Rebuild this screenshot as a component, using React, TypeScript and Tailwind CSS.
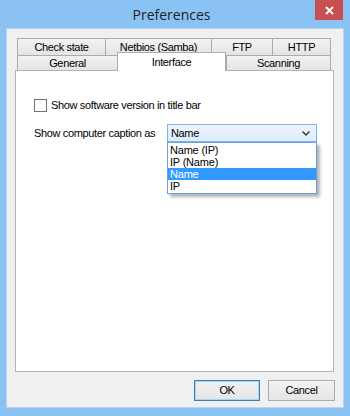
import { useState } from "react";

const rowOne = [
  { label: "Check state", w: "w-[88px]" },
  { label: "Netbios (Samba)", w: "w-[106px]" },
  { label: "FTP", w: "w-[61px]" },
  { label: "HTTP", w: "w-[59px]" },
];

const rowTwo = [
  { label: "General", w: "w-[100px]" },
  { label: "Interface", w: "w-[109px]" },
  { label: "Scanning", w: "w-[105px]" },
];

const options = ["Name (IP)", "IP (Name)", "Name", "IP"];

const Preferences = () => {
  const [showVersion, setShowVersion] = useState(false);
  const [caption, setCaption] = useState("Name");
  const active = "Interface";

  return (
    <div className="w-[350px] h-[416px] bg-[#8ac2f4] flex flex-col font-['Liberation_Sans',Arial,sans-serif] text-[11px] tracking-[-0.35px] text-black overflow-hidden">
      {/* title bar */}
      <div className="h-[28px] flex items-start shrink-0">
        <div className="w-[28px]" />
        <div className="flex-1 text-center pt-[4px] font-['Open_Sans',sans-serif] text-[14px] tracking-normal text-[#222]">
          Preferences
        </div>
        <button className="w-[28px] h-[20px] mr-[7px] bg-[#c75050] flex items-center justify-center">
          <svg width="9" height="9" viewBox="0 0 9 9">
            <path d="M1 1 L8 8 M8 1 L1 8" stroke="white" strokeWidth="1.8" />
          </svg>
        </button>
      </div>

      {/* client */}
      <div className="flex-1 mx-[6px] mb-[8px] border border-[#b6d5f4] bg-[#f0f0f0] flex flex-col pt-[9px] pb-[6px]">
        <div className="pl-[10px] flex">
          {rowOne.map((t, i) => (
            <div
              key={t.label}
              className={`${t.w} h-[17px] border-t border-l border-[#acacac] bg-gradient-to-b from-[#f2f2f2] to-[#e4e4e4] flex items-center justify-center ${
                i === rowOne.length - 1 ? "border-r" : ""
              }`}
            >
              {t.label}
            </div>
          ))}
        </div>
        <div className="pl-[10px] flex items-end h-[15px]">
          {rowTwo.map((t, i) =>
            t.label === active ? (
              <div
                key={t.label}
                className={`${t.w} h-[19px] -mb-px relative z-10 bg-white border-t border-l border-r border-[#acacac] flex items-start justify-center pt-[1px]`}
              >
                {t.label}
              </div>
            ) : (
              <div
                key={t.label}
                className={`${t.w} h-[15px] border-t border-l border-[#acacac] bg-gradient-to-b from-[#f2f2f2] to-[#e4e4e4] flex items-center justify-center ${
                  i === rowTwo.length - 1 ? "border-r" : ""
                }`}
              >
                {t.label}
              </div>
            )
          )}
        </div>

        {/* panel */}
        <div className="ml-[8px] mr-[9px] flex-1 bg-white border border-[#b4b4b4] pt-[28px] pl-[18px]">
          <label className="flex items-center gap-[4px] h-[13px]">
            <span
              onClick={() => setShowVersion(!showVersion)}
              className="w-[13px] h-[13px] border border-[#707070] bg-white flex items-center justify-center"
            >
              {showVersion && <span className="text-[10px]">✓</span>}
            </span>
            <span>Show software version in title bar</span>
          </label>

          <div className="flex items-center mt-[12px]">
            <span className="w-[133px]">Show computer caption as</span>
            <div className="relative">
              <div className="w-[150px] h-[18px] border border-[#7eb4ea] bg-gradient-to-b from-[#edf5fc] to-[#dcecfc] flex items-center justify-between pl-[3px] pr-[6px]">
                <span>{caption}</span>
                <svg width="8" height="5" viewBox="0 0 8 5">
                  <path d="M0.5 0.5 L4 4 L7.5 0.5" stroke="#333" strokeWidth="1.4" fill="none" />
                </svg>
              </div>
              <div className="absolute left-0 top-full w-[150px] bg-white border border-[#6d9fd6] shadow-[3px_3px_3px_rgba(0,0,0,0.3)] py-[1px]">
                {options.map((o) => (
                  <div
                    key={o}
                    onClick={() => setCaption(o)}
                    className={`h-[12px] leading-[12px] pl-[2px] text-[11px] tracking-[-0.2px] overflow-hidden ${
                      o === caption ? "bg-[#3399ff] text-white" : ""
                    }`}
                  >
                    {o}
                  </div>
                ))}
              </div>
            </div>
          </div>
        </div>

        {/* buttons */}
        <div className="flex justify-end gap-[8px] mt-[8px] mr-[8px]">
          <button className="w-[66px] h-[21px] border border-[#3c7fb1] bg-gradient-to-b from-[#f2f2f2] to-[#e5e5e5] shadow-[inset_0_0_0_1px_#a8d1f4]">
            OK
          </button>
          <button className="w-[67px] h-[21px] border border-[#acacac] bg-gradient-to-b from-[#f2f2f2] to-[#e5e5e5]">
            Cancel
          </button>
        </div>
      </div>
    </div>
  );
};

export default function App() {
  return <Preferences />;
}
